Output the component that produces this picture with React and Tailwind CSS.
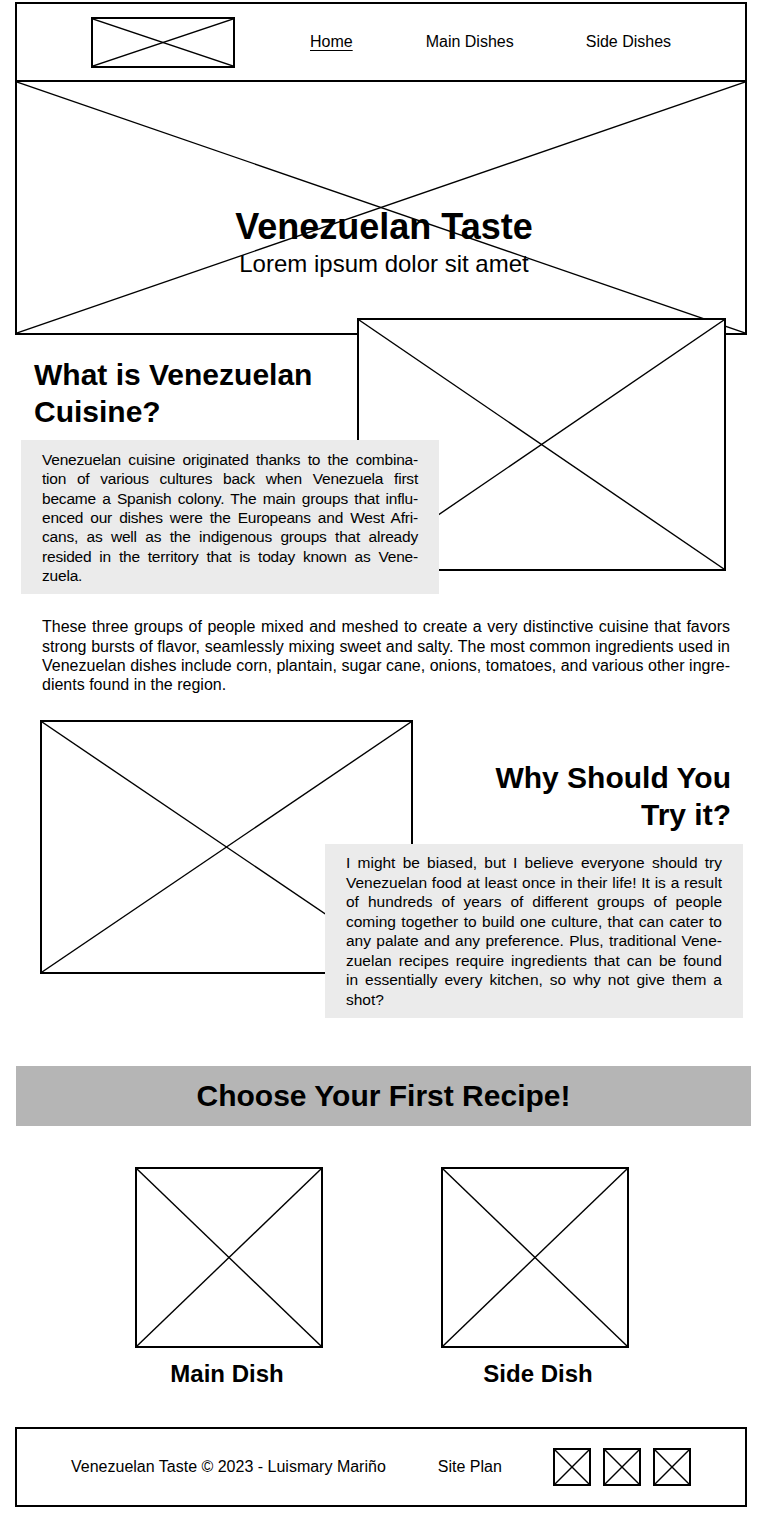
import React from "react";

function XBox({ className = "" }) {
  return (
    <div className={`relative bg-white border-2 border-black ${className}`}>
      <svg className="absolute inset-0 h-full w-full" viewBox="0 0 100 100" preserveAspectRatio="none">
        <line x1="0" y1="0" x2="100" y2="100" stroke="black" strokeWidth="1.4" vectorEffect="non-scaling-stroke" />
        <line x1="0" y1="100" x2="100" y2="0" stroke="black" strokeWidth="1.4" vectorEffect="non-scaling-stroke" />
      </svg>
    </div>
  );
}

function Lines({ lines, className = "" }) {
  return (
    <p className={className}>
      {lines.map((l, i) =>
        i < lines.length - 1 ? (
          <span key={i} className="block text-justify [text-align-last:justify]">{l}</span>
        ) : (
          <span key={i} className="block text-left">{l}</span>
        )
      )}
    </p>
  );
}

const box1 = [
  "Venezuelan cuisine originated thanks to the combina-",
  "tion of various cultures back when Venezuela first",
  "became a Spanish colony. The main groups that influ-",
  "enced our dishes were the Europeans and West Afri-",
  "cans, as well as the indigenous groups that already",
  "resided in the territory that is today known as Vene-",
  "zuela.",
];

const box2 = [
  "I might be biased, but I believe everyone should try",
  "Venezuelan food at least once in their life! It is a result",
  "of hundreds of years of different groups of people",
  "coming together to build one culture, that can cater to",
  "any palate and any preference. Plus, traditional Vene-",
  "zuelan recipes require ingredients that can be found",
  "in essentially every kitchen, so why not give them a",
  "shot?",
];

export default function App() {
  return (
    <div className="w-[768px] bg-white text-black font-['Liberation_Sans',Arial,sans-serif] pt-[2px] pb-[24px]">
      {/* Header */}
      <header className="ml-[15px] w-[732px] h-[80px] border-2 border-black flex items-center">
        <XBox className="ml-[74px] w-[144px] h-[51px]" />
        <nav className="flex items-center text-[16px]">
          <a className="ml-[75px] underline underline-offset-[3px] decoration-1">Home</a>
          <a className="ml-[73px]">Main Dishes</a>
          <a className="ml-[72px]">Side Dishes</a>
        </nav>
      </header>

      {/* Hero */}
      <section className="relative ml-[15px] w-[732px] h-[253px] border-2 border-t-0 border-black">
        <svg className="absolute inset-0 h-full w-full" viewBox="0 0 100 100" preserveAspectRatio="none">
          <line x1="0" y1="0" x2="100" y2="100" stroke="black" strokeWidth="1.3" vectorEffect="non-scaling-stroke" />
          <line x1="0" y1="100" x2="100" y2="0" stroke="black" strokeWidth="1.3" vectorEffect="non-scaling-stroke" />
        </svg>
        <div className="relative flex flex-col items-center pt-[125px] pl-[6px]">
          <h1 className="text-[36px] leading-[40px] font-bold">Venezuelan Taste</h1>
          <p className="text-[24px] leading-[32px] mt-[1px]">Lorem ipsum dolor sit amet</p>
        </div>
      </section>

      {/* What is Venezuelan Cuisine */}
      <section className="flex items-start">
        <div className="relative z-10 ml-[21px] w-[418px]">
          <h2 className="pl-[13px] mt-[21px] text-[30px] leading-[37px] font-bold">
            What is Venezuelan
            <br />
            Cuisine?
          </h2>
          <div className="mt-[10px] bg-[#ebebeb] px-[21px] pt-[10px] pb-[9px]">
            <Lines lines={box1} className="text-[15.5px] leading-[19.33px] tracking-[-0.2px]" />
          </div>
        </div>
        <XBox className="ml-[-82px] mt-[-17px] w-[369px] h-[253px]" />
      </section>

      <p className="ml-[42px] w-[688px] mt-[23px] text-[16px] leading-[19.3px] text-justify">
        These three groups of people mixed and meshed to create a very distinctive cuisine that favors strong bursts of flavor, seamlessly mixing sweet and salty. The most common ingredients used in Venezuelan dishes include corn, plantain, sugar cane, onions, tomatoes, and various other ingre{"\u00AD"}dients found in the region.
      </p>

      {/* Why should you try it */}
      <section className="flex items-start mt-[26px]">
        <XBox className="ml-[40px] w-[373px] h-[254px]" />
        <div className="relative z-10 ml-[-88px] w-[418px]">
          <h2 className="pr-[12px] mt-[39px] text-right text-[30px] leading-[37px] font-bold">
            Why Should You
            <br />
            Try it?
          </h2>
          <div className="mt-[11px] bg-[#ebebeb] px-[21px] pt-[9px] pb-[9px]">
            <Lines lines={box2} className="text-[15.5px] leading-[19.43px]" />
          </div>
        </div>
      </section>

      {/* Banner */}
      <div className="ml-[16px] w-[735px] h-[60px] mt-[48px] bg-[#b5b5b5] flex items-center justify-center">
        <h2 className="text-[30px] font-bold leading-[36px]">Choose Your First Recipe!</h2>
      </div>

      {/* Recipe cards */}
      <div className="flex ml-[135px] mt-[41px] gap-[118px]">
        <div className="w-[188px] flex flex-col items-center">
          <XBox className="w-[188px] h-[181px]" />
          <p className="mt-[11px] text-[24px] leading-[30px] font-bold pr-[4px]">Main Dish</p>
        </div>
        <div className="w-[188px] flex flex-col items-center">
          <XBox className="w-[188px] h-[181px]" />
          <p className="mt-[11px] text-[24px] leading-[30px] font-bold pl-[6px]">Side Dish</p>
        </div>
      </div>

      {/* Footer */}
      <footer className="ml-[15px] w-[732px] h-[80px] mt-[38px] border-2 border-black flex items-center text-[16px]">
        <span className="ml-[54px]">Venezuelan Taste © 2023 - Luismary Mariño</span>
        <span className="ml-[52px]">Site Plan</span>
        <div className="ml-[51px] flex gap-[12px]">
          <XBox className="w-[38px] h-[38px]" />
          <XBox className="w-[38px] h-[38px]" />
          <XBox className="w-[38px] h-[38px]" />
        </div>
      </footer>
    </div>
  );
}
